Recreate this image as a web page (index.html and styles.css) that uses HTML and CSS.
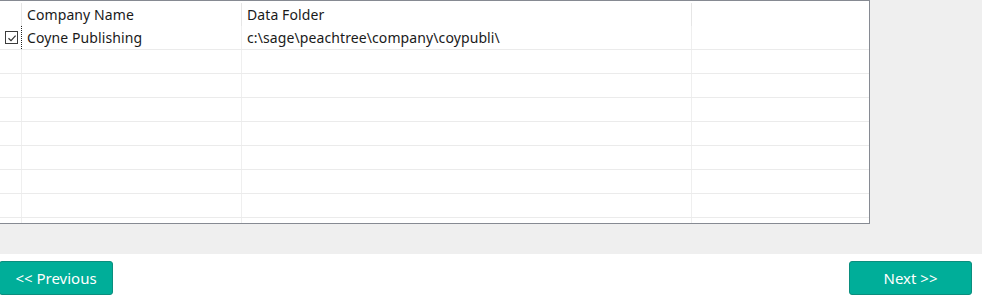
FILE: index.html
```html
<!DOCTYPE html>
<html lang="en">
<head>
	<meta charset="UTF-8">
	<title>Select Company</title>
	<link rel="stylesheet" href="styles.css">
</head>
<body>
	<div id="wizard-panel">
		<!-- company list -->
		<div class="company-grid">
			<div class="grid-row grid-head">
				<div class="cell cell-check"></div>
				<div class="cell cell-name">Company Name</div>
				<div class="cell cell-folder">Data Folder</div>
				<div class="cell cell-rest"></div>
			</div>
			<div class="grid-row">
				<div class="cell cell-check"><span class="checkbox is-checked"><svg width="10" height="10" viewBox="0 0 10 10"><path d="M1.5 5.2 L4 7.6 L8.6 2.6" fill="none" stroke="#333" stroke-width="1.2"/></svg></span></div>
				<div class="cell cell-name">Coyne Publishing</div>
				<div class="cell cell-folder">c:\sage\peachtree\company\coypubli\</div>
				<div class="cell cell-rest"></div>
			</div>
			<div class="grid-row"><div class="cell cell-check"></div><div class="cell cell-name"></div><div class="cell cell-folder"></div><div class="cell cell-rest"></div></div>
			<div class="grid-row"><div class="cell cell-check"></div><div class="cell cell-name"></div><div class="cell cell-folder"></div><div class="cell cell-rest"></div></div>
			<div class="grid-row"><div class="cell cell-check"></div><div class="cell cell-name"></div><div class="cell cell-folder"></div><div class="cell cell-rest"></div></div>
			<div class="grid-row"><div class="cell cell-check"></div><div class="cell cell-name"></div><div class="cell cell-folder"></div><div class="cell cell-rest"></div></div>
			<div class="grid-row"><div class="cell cell-check"></div><div class="cell cell-name"></div><div class="cell cell-folder"></div><div class="cell cell-rest"></div></div>
			<div class="grid-row"><div class="cell cell-check"></div><div class="cell cell-name"></div><div class="cell cell-folder"></div><div class="cell cell-rest"></div></div>
			<div class="grid-row"><div class="cell cell-check"></div><div class="cell cell-name"></div><div class="cell cell-folder"></div><div class="cell cell-rest"></div></div>
			<div class="grid-row"><div class="cell cell-check"></div><div class="cell cell-name"></div><div class="cell cell-folder"></div><div class="cell cell-rest"></div></div>
		</div>
	</div>

	<!-- navigation -->
	<div id="wizard-nav">
		<button type="button" class="nav-btn btn-prev">&lt;&lt; Previous</button>
		<button type="button" class="nav-btn btn-next">Next &gt;&gt;</button>
	</div>
</body>
</html>
```

FILE: styles.css
```css
* {
	box-sizing: border-box;
}

body {
	margin: 0;
	background-color: white;
	font-family: "Noto Sans", "Open Sans", sans-serif;
	font-size: 14px;
	color: #1a1a1a;
	overflow: hidden;
}

div#wizard-panel {
	height: 254px;
	background-color: #efefef;
}

div.company-grid {
	margin-left: -1px;
	width: 871px;
	height: 224px;
	border: 1px solid #868a92;
	background-color: white;
	overflow: hidden;
}

div.grid-row {
	display: flex;
	height: 24px;
	border-bottom: 1px solid #ebebeb;
}

div.grid-row.grid-head {
	height: 25px;
	border-bottom: none;
	padding-top: 2px;
}

div.cell {
	display: flex;
	align-items: center;
	padding-left: 5px;
	padding-top: 1px;
	border-right: 1px solid #efefef;
	white-space: nowrap;
	line-height: 1;
	letter-spacing: 0.1px;
}

div.grid-head div.cell {
	border-right-color: #e6e6e6;
}

div.cell-check {
	width: 22px;
	padding-left: 5px;
	padding-top: 0;
}

div.cell-name {
	width: 220px;
}

div.cell-folder {
	width: 450px;
}

div.cell-rest {
	flex: 1;
	border-right: none;
}

div.grid-row:nth-child(2) div.cell-check {
	border-right: 1px dotted #222;
}

span.checkbox {
	display: flex;
	align-items: center;
	justify-content: center;
	width: 13px;
	height: 13px;
	border: 1px solid #3c3c3c;
	background-color: white;
}

div#wizard-nav {
	display: flex;
	justify-content: space-between;
	margin-left: -1px;
	padding: 7px 10px 0 0;
}

button.nav-btn {
	height: 34px;
	border: 1px solid #0b8e7e;
	border-radius: 3px;
	background-color: #00ae99;
	color: white;
	font-family: "Noto Sans", "Open Sans", sans-serif;
	font-size: 15px;
	padding: 0 0 1px;
}

button.btn-prev {
	width: 114px;
}

button.btn-next {
	width: 123px;
}
```
